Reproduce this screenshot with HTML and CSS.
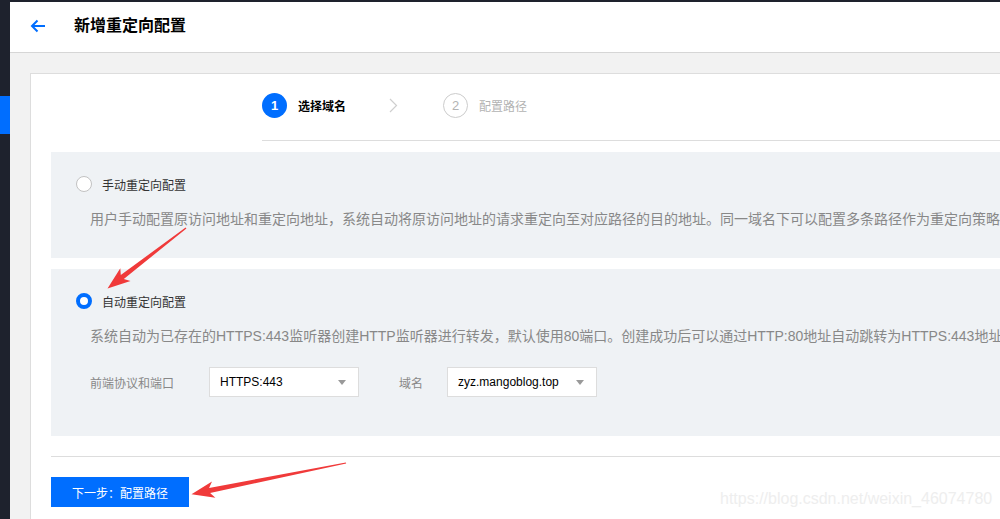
FILE: index.html
```html
<!DOCTYPE html>
<html lang="zh-CN">
<head>
<meta charset="utf-8">
<title>新增重定向配置</title>
<link rel="stylesheet" href="styles.css">
</head>
<body>
<div class="app">
  <div class="topstrip"></div>
  <div class="frame">
    <aside class="sidebar"><div class="nav-active"></div></aside>
    <main class="main">
      <header class="header">
        <svg class="back" width="16" height="14" viewBox="0 0 16 14"><path d="M15 7H2M7.5 1.5L2 7l5.5 5.5" fill="none" stroke="#006eff" stroke-width="2"/></svg>
        <h1 class="title">新增重定向配置</h1>
      </header>
      <div class="content">
        <section class="card">
          <div class="steps">
            <div class="step step-on"><span class="num">1</span><span class="step-text">选择域名</span></div>
            <svg class="chev" width="9" height="15" viewBox="0 0 9 15"><path d="M1 1l6.5 6.5L1 14" fill="none" stroke="#cfcfcf" stroke-width="1.2"/></svg>
            <div class="step step-off"><span class="num">2</span><span class="step-text">配置路径</span></div>
          </div>

          <div class="panel panel-manual">
            <label class="radio-row"><span class="radio"></span><span class="radio-label">手动重定向配置</span></label>
            <p class="desc">用户手动配置原访问地址和重定向地址，系统自动将原访问地址的请求重定向至对应路径的目的地址。同一域名下可以配置多条路径作为重定向策略。</p>
          </div>

          <div class="panel panel-auto">
            <label class="radio-row"><span class="radio radio-on"></span><span class="radio-label">自动重定向配置</span></label>
            <p class="desc">系统自动为已存在的HTTPS:443监听器创建HTTP监听器进行转发，默认使用80端口。创建成功后可以通过HTTP:80地址自动跳转为HTTPS:443地址。</p>
            <div class="form-row">
              <span class="form-label label-proto">前端协议和端口</span>
              <div class="select select-proto"><span>HTTPS:443</span><i class="caret"></i></div>
              <span class="form-label label-domain">域名</span>
              <div class="select"><span>zyz.mangoblog.top</span><i class="caret"></i></div>
            </div>
          </div>

          <div class="footer">
            <button class="btn-primary">下一步：配置路径</button>
          </div>
        </section>
      </div>
    </main>
  </div>
</div>

<svg class="annot" width="1000" height="519" viewBox="0 0 1000 519">
  <polygon fill="#f03a3a" points="185.6,227.5 120.8,275.0 120.3,268.3 107.5,288.5 130.5,281.0 123.8,279.0 186.4,228.5"/>
  <polygon fill="#f03a3a" points="345.8,462.4 209.1,488.0 212.0,481.5 191.5,494.2 215.4,497.8 210.1,492.9 346.2,463.6"/>
</svg>
<div class="watermark">https://blog.csdn.net/weixin_46074780</div>
</body>
</html>
```
FILE: styles.css
```css
* { box-sizing: border-box; }
html, body {
  margin: 0;
  padding: 0;
  width: 1000px;
  height: 519px;
  overflow: hidden;
  background: #f2f2f2;
  font-family: "Liberation Sans", "Noto Sans CJK SC", sans-serif;
  font-size: 12px;
  color: #333;
}
.app { display: flex; flex-direction: column; height: 519px; }
.topstrip { height: 2px; background: #1e222d; flex: none; }
.frame { display: flex; flex: 1; min-height: 0; }
.sidebar { width: 10px; flex: none; background: #1e222d; }
.nav-active { margin-top: 94px; height: 38px; background: #006eff; }
.main { flex: 1; min-width: 0; overflow: hidden; }

.header {
  height: 51px;
  background: #fff;
  border-bottom: 1px solid #d6d6d6;
  display: flex;
  align-items: center;
  padding-left: 20px;
}
.back { display: block; margin-right: 28px; margin-top: -2px; }
.title {
  margin: 0;
  font-size: 16px;
  font-weight: bold;
  color: #000;
  line-height: 20px;
  margin-top: -2px;
}

.content { padding: 20px 0 0 20px; }
.card {
  width: 1100px;
  background: #fff;
  border: 1px solid #dddddd;
  padding: 19px 20px 0 20px;
  height: 600px;
}

.steps {
  display: flex;
  align-items: center;
  margin-left: 211px;
  padding-bottom: 22px;
  border-bottom: 1px solid #dddddd;
}
.step { display: flex; align-items: center; }
.num {
  width: 25px;
  height: 25px;
  border-radius: 50%;
  display: flex;
  align-items: center;
  justify-content: center;
  font-size: 13px;
  margin-right: 11px;
}
.step-on .num { background: #006eff; color: #fff; font-weight: bold; }
.step-on .step-text { font-weight: bold; color: #000; }
.step-off .num { border: 1px solid #cccccc; color: #b3b3b3; }
.step-off .step-text { color: #b3b3b3; }
.chev { display: block; margin: 0 45px 0 43px; }

.panel {
  background: #eff2f5;
  margin-top: 11px;
  padding: 24px 25px 29px 25px;
}
.panel-auto { padding-bottom: 39px; }
.radio-row { display: flex; align-items: center; height: 16px; }
.radio {
  width: 16px;
  height: 16px;
  border-radius: 50%;
  background: #fff;
  border: 1px solid #c2c2c2;
  margin-right: 10px;
  flex: none;
}
.radio-on { border: 4px solid #006eff; }
.radio-label { color: #333; font-size: 12px; }
.desc {
  margin: 17px 0 0 14px;
  font-size: 14px;
  line-height: 20px;
  color: #888;
  white-space: nowrap;
}

.form-row {
  display: flex;
  align-items: center;
  margin: 21px 0 0 14px;
}
.form-label { color: #888; font-size: 12px; }
.label-proto { margin-right: 35px; }
.label-domain { margin-right: 24px; }
.select {
  width: 150px;
  height: 30px;
  background: #fff;
  border: 1px solid #dddddd;
  display: flex;
  align-items: center;
  justify-content: space-between;
  padding: 0 12px 0 10px;
  color: #000;
  font-size: 12px;
}
.select-proto { margin-right: 40px; }
.caret {
  width: 0;
  height: 0;
  border-left: 4px solid transparent;
  border-right: 4px solid transparent;
  border-top: 5px solid #999;
}

.footer {
  margin-top: 20px;
  border-top: 1px solid #dddddd;
  padding-top: 20px;
}
.btn-primary {
  width: 138px;
  height: 30px;
  border: none;
  background: #006eff;
  color: #fff;
  font-family: "Liberation Sans", "Noto Sans CJK SC", sans-serif;
  font-size: 12px;
  padding: 0;
}

.annot { position: absolute; left: 0; top: 0; pointer-events: none; }
.watermark {
  position: absolute;
  left: 720px;
  top: 490px;
  font-size: 16px;
  color: #eeeeee;
  font-family: "Liberation Sans", sans-serif;
  pointer-events: none;
}
```
